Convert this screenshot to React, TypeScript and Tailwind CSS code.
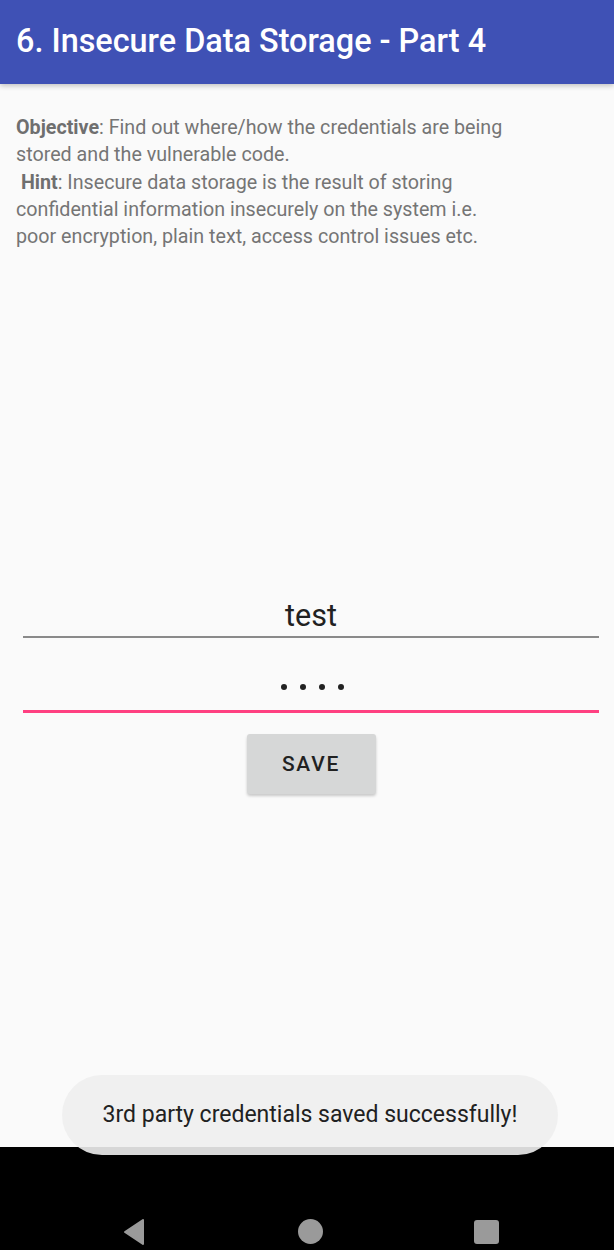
import React from 'react';

const App: React.FC = () => {
  return (
    <div className="relative w-[614px] h-[1250px] overflow-hidden bg-[#FAFAFA] font-['Roboto',sans-serif]">
      {/* app bar */}
      <div className="relative z-10 h-[84px] bg-[#3F51B5] flex items-center pl-[16px] pb-[2px] shadow-[0_2px_5px_rgba(0,0,0,0.22)]">
        <h1 className="text-white text-[32.4px] font-medium leading-none">6. Insecure Data Storage - Part 4</h1>
      </div>

      <div className="h-[1063px] flex flex-col">
        <p className="pt-[30px] pl-[16px] text-[19.7px] leading-[27.3px] text-[#757575] whitespace-nowrap">
          <span className="font-bold text-[#6f6f6f]">Objective</span>: Find out where/how the credentials are being
          <br />
          stored and the vulnerable code.
          <br />
          {'\u00a0'}<span className="font-bold text-[#6f6f6f]">Hint</span>: Insecure data storage is the result of storing
          <br />
          confidential information insecurely on the system i.e.
          <br />
          poor encryption, plain text, access control issues etc.
        </p>

        {/* form */}
        <div className="mt-[350px] ml-[23px] mr-[15px] flex flex-col">
          <div className="flex flex-col">
            <div className="h-[32px] leading-[32px] text-center text-[30.5px] text-[#212121]">test</div>
            <div className="mt-[4px] h-[2px] bg-[#8a8a8a]" />
          </div>
          <div className="mt-[33px] flex flex-col">
            <div className="h-[32px] flex items-center justify-center gap-[13px] pl-[2px]">
              <span className="w-[6px] h-[6px] rounded-full bg-[#212121]" />
              <span className="w-[6px] h-[6px] rounded-full bg-[#212121]" />
              <span className="w-[6px] h-[6px] rounded-full bg-[#212121]" />
              <span className="w-[6px] h-[6px] rounded-full bg-[#212121]" />
            </div>
            <div className="mt-[7px] h-[3px] bg-[#FF4081]" />
          </div>
          <div className="mt-[21px] flex justify-center">
            <button className="w-[129px] h-[60px] bg-[#D6D7D7] rounded-[3px] text-[20.9px] font-medium tracking-[1.8px] text-[#212121] shadow-[0_2px_3px_rgba(0,0,0,0.2)]">
              SAVE
            </button>
          </div>
        </div>
      </div>

      {/* navigation bar */}
      <div className="h-[103px] bg-black flex items-end justify-between pb-[4px] pl-[122px] pr-[115px]">
        <svg width="24" height="28" viewBox="0 0 24 28">
          <path d="M21 2 L3 14 L21 26 Z" fill="#9A9A9A" stroke="#9A9A9A" strokeWidth="2" strokeLinejoin="round" />
        </svg>
        <div className="w-[25px] h-[25px] mb-[2px] rounded-full bg-[#9A9A9A]" />
        <div className="w-[25px] h-[24px] mb-[2px] rounded-[3px] bg-[#9A9A9A]" />
      </div>

      {/* toast */}
      <div className="absolute left-[62px] top-[1075px] w-[496px] h-[80px] rounded-full bg-[rgba(238,238,238,0.9)] flex items-center justify-center">
        <span className="text-[23px] text-[#212121]">3rd party credentials saved successfully!</span>
      </div>
    </div>
  );
};

export default App;
